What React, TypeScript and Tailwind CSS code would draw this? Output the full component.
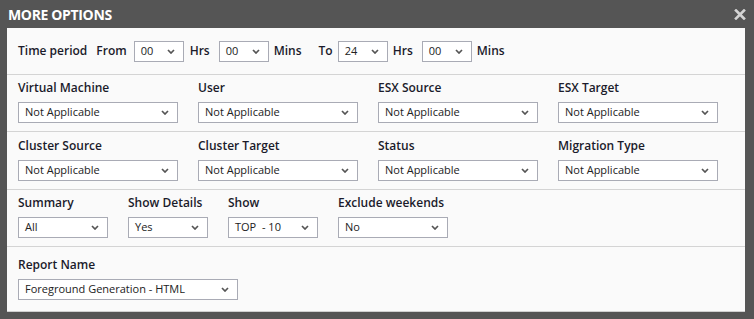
import React from 'react';

const font = { fontFamily: '"Open Sans", "Noto Sans", sans-serif' };

function Chevron() {
    return (
        <svg width="8" height="5" viewBox="0 0 8 5" className="shrink-0">
            <polyline points="1,1 4,4 7,1" fill="none" stroke="#555" strokeWidth="1.7" />
        </svg>
    );
}

function Select({ value, w }: { value: string; w: string }) {
    return (
        <div className={`${w} h-[21px] bg-white border border-[#a9abb5] flex items-center justify-between pl-[6px] pr-[8px] text-[11px] text-[#222]`}>
            <span className="whitespace-pre leading-none -mt-[2px]">{value}</span>
            <Chevron />
        </div>
    );
}

function Field({ label, value, w, gap = 'w-[180px]' }: { label: string; value: string; w: string; gap?: string }) {
    return (
        <div className={`${gap} shrink-0`}>
            <div className="text-[12px] font-semibold leading-[16px] text-[#1b1b2b] mb-[6px] whitespace-nowrap">{label}</div>
            <Select value={value} w={w} />
        </div>
    );
}

export default function App() {
    return (
        <div className="w-[754px] h-[319px] bg-[#555555] flex flex-col" style={font}>
            {/* Title bar */}
            <div className="h-[28px] flex items-center justify-between pl-[8px] pr-[8px]">
                <span className="text-white font-bold text-[14px] tracking-tight">MORE OPTIONS</span>
                <svg width="12" height="11" viewBox="0 0 12 11">
                    <path d="M2 1.5 L10 9.5 M10 1.5 L2 9.5" stroke="#d4d4d4" strokeWidth="2.6" strokeLinecap="square" />
                </svg>
            </div>

            {/* Panel */}
            <div className="ml-[7px] mr-[9px] bg-[#fafafa] border-b border-[#d0d0d0] flex flex-col">
                {/* Time period */}
                <div className="h-[47px] border-b border-[#d4d4d4] flex items-center px-[11px] text-[12px] font-semibold text-[#1b1b2b]">
                    <span>Time period</span>
                    <span className="ml-[9px]">From</span>
                    <div className="ml-[7px] font-normal"><Select value="00" w="w-[50px]" /></div>
                    <span className="ml-[6px]">Hrs</span>
                    <div className="ml-[9px] font-normal"><Select value="00" w="w-[50px]" /></div>
                    <span className="ml-[5px]">Mins</span>
                    <span className="ml-[17px]">To</span>
                    <div className="ml-[5px] font-normal"><Select value="24" w="w-[50px]" /></div>
                    <span className="ml-[5px]">Hrs</span>
                    <div className="ml-[9px] font-normal"><Select value="00" w="w-[50px]" /></div>
                    <span className="ml-[5px]">Mins</span>
                </div>

                {/* Row 2 */}
                <div className="flex px-[11px] pt-[5px] pb-[8px] border-b border-[#d4d4d4]">
                    <Field label="Virtual Machine" value="Not Applicable" w="w-[160px]" />
                    <Field label="User" value="Not Applicable" w="w-[160px]" />
                    <Field label="ESX Source" value="Not Applicable" w="w-[160px]" />
                    <Field label="ESX Target" value="Not Applicable" w="w-[160px]" />
                </div>

                {/* Row 3 */}
                <div className="flex px-[11px] pt-[6px] pb-[8px] border-b border-[#d4d4d4]">
                    <Field label="Cluster Source" value="Not Applicable" w="w-[160px]" />
                    <Field label="Cluster Target" value="Not Applicable" w="w-[160px]" />
                    <Field label="Status" value="Not Applicable" w="w-[160px]" />
                    <Field label="Migration Type" value="Not Applicable" w="w-[160px]" />
                </div>

                {/* Row 4 */}
                <div className="flex px-[11px] pt-[5px] pb-[8px] border-b border-[#d4d4d4]">
                    <Field label="Summary" value="All" w="w-[90px]" gap="w-[110px]" />
                    <Field label="Show Details" value="Yes" w="w-[80px]" gap="w-[100px]" />
                    <Field label="Show" value="TOP  - 10" w="w-[90px]" gap="w-[110px]" />
                    <Field label="Exclude weekends" value="No" w="w-[110px]" gap="w-[130px]" />
                </div>

                {/* Row 5 */}
                <div className="flex px-[11px] pt-[10px] pb-[11px]">
                    <Field label="Report Name" value="Foreground Generation - HTML" w="w-[220px]" gap="w-[240px]" />
                </div>
            </div>
        </div>
    );
}
